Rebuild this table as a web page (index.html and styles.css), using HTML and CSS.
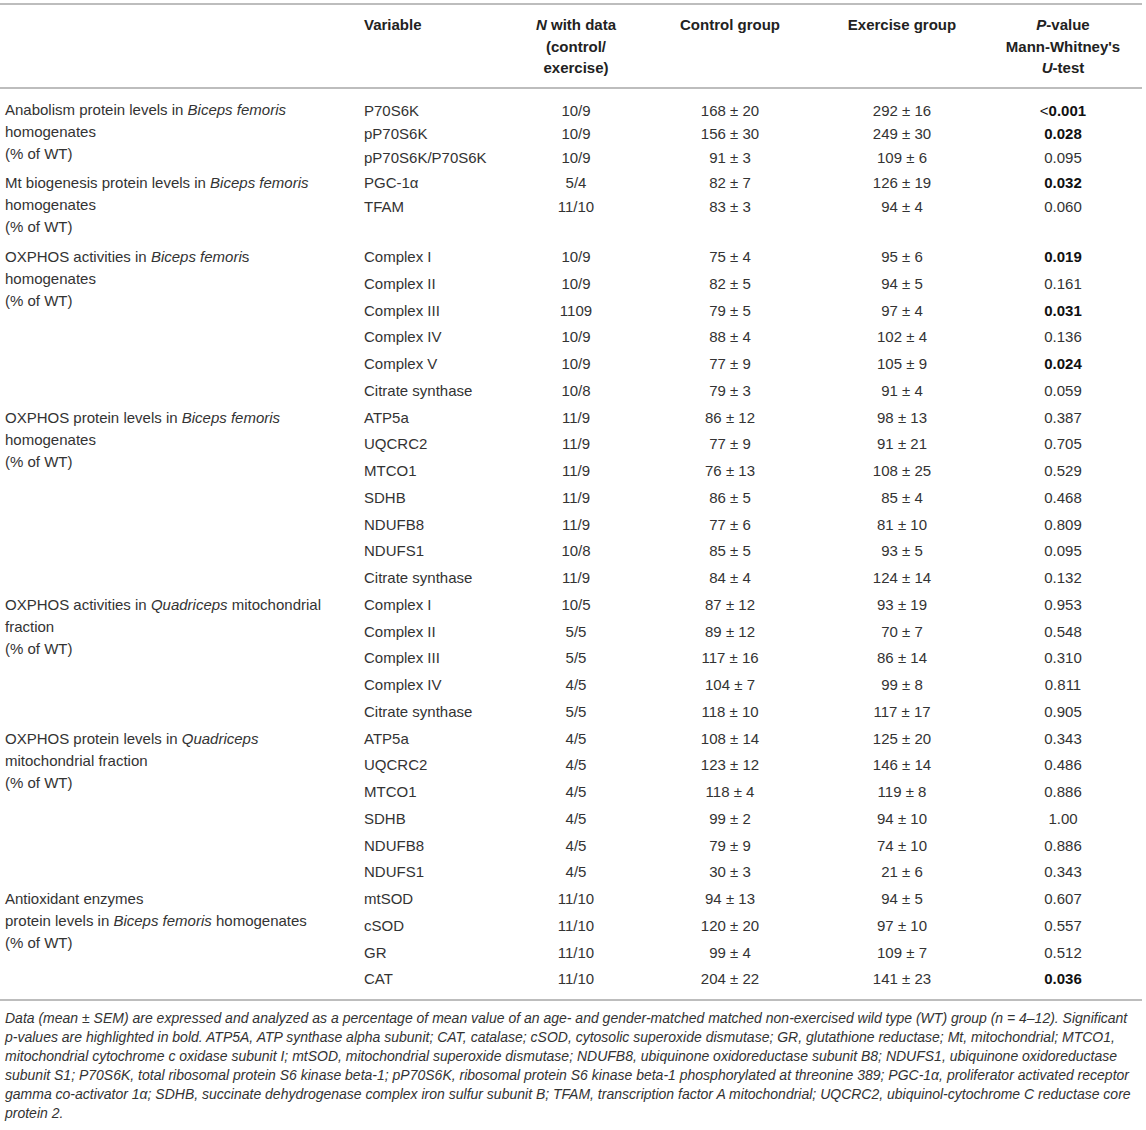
FILE: index.html
```html
<!DOCTYPE html>
<html lang="en">
<head>
<meta charset="utf-8">
<title>Table</title>
<link rel="stylesheet" href="styles.css">
</head>
<body>
<div class="table">
  <div class="thead cols">
    <div class="h"></div>
    <div class="h left">Variable</div>
    <div class="h"><i>N</i> with data<br>(control/<br>exercise)</div>
    <div class="h">Control group</div>
    <div class="h">Exercise group</div>
    <div class="h"><i>P</i>-value<br>Mann-Whitney's<br><i>U</i>-test</div>
  </div>

  <div class="tbody">
    <div class="group tight first">
      <div class="label">Anabolism protein levels in <i>Biceps femoris</i><br>homogenates<br>(% of WT)</div>
      <div class="rows">
        <div class="row"><span class="var">P70S6K</span><span>10/9</span><span>168 ± 20</span><span>292 ± 16</span><span><span class="lt">&lt;</span><b>0.001</b></span></div>
        <div class="row"><span class="var">pP70S6K</span><span>10/9</span><span>156 ± 30</span><span>249 ± 30</span><span><b>0.028</b></span></div>
        <div class="row"><span class="var">pP70S6K/P70S6K</span><span>10/9</span><span>91 ± 3</span><span>109 ± 6</span><span>0.095</span></div>
      </div>
    </div>

    <div class="group tight">
      <div class="label">Mt biogenesis protein levels in <i>Biceps femoris</i><br>homogenates<br>(% of WT)</div>
      <div class="rows">
        <div class="row"><span class="var">PGC-1α</span><span>5/4</span><span>82 ± 7</span><span>126 ± 19</span><span><b>0.032</b></span></div>
        <div class="row"><span class="var">TFAM</span><span>11/10</span><span>83 ± 3</span><span>94 ± 4</span><span>0.060</span></div>
      </div>
    </div>

    <div class="group">
      <div class="label">OXPHOS activities in <i>Biceps femori</i>s<br>homogenates<br>(% of WT)</div>
      <div class="rows">
        <div class="row"><span class="var">Complex I</span><span>10/9</span><span>75 ± 4</span><span>95 ± 6</span><span><b>0.019</b></span></div>
        <div class="row"><span class="var">Complex II</span><span>10/9</span><span>82 ± 5</span><span>94 ± 5</span><span>0.161</span></div>
        <div class="row"><span class="var">Complex III</span><span>1109</span><span>79 ± 5</span><span>97 ± 4</span><span><b>0.031</b></span></div>
        <div class="row"><span class="var">Complex IV</span><span>10/9</span><span>88 ± 4</span><span>102 ± 4</span><span>0.136</span></div>
        <div class="row"><span class="var">Complex V</span><span>10/9</span><span>77 ± 9</span><span>105 ± 9</span><span><b>0.024</b></span></div>
        <div class="row"><span class="var">Citrate synthase</span><span>10/8</span><span>79 ± 3</span><span>91 ± 4</span><span>0.059</span></div>
      </div>
    </div>

    <div class="group">
      <div class="label">OXPHOS protein levels in <i>Biceps femoris</i><br>homogenates<br>(% of WT)</div>
      <div class="rows">
        <div class="row"><span class="var">ATP5a</span><span>11/9</span><span>86 ± 12</span><span>98 ± 13</span><span>0.387</span></div>
        <div class="row"><span class="var">UQCRC2</span><span>11/9</span><span>77 ± 9</span><span>91 ± 21</span><span>0.705</span></div>
        <div class="row"><span class="var">MTCO1</span><span>11/9</span><span>76 ± 13</span><span>108 ± 25</span><span>0.529</span></div>
        <div class="row"><span class="var">SDHB</span><span>11/9</span><span>86 ± 5</span><span>85 ± 4</span><span>0.468</span></div>
        <div class="row"><span class="var">NDUFB8</span><span>11/9</span><span>77 ± 6</span><span>81 ± 10</span><span>0.809</span></div>
        <div class="row"><span class="var">NDUFS1</span><span>10/8</span><span>85 ± 5</span><span>93 ± 5</span><span>0.095</span></div>
        <div class="row"><span class="var">Citrate synthase</span><span>11/9</span><span>84 ± 4</span><span>124 ± 14</span><span>0.132</span></div>
      </div>
    </div>

    <div class="group">
      <div class="label">OXPHOS activities in <i>Quadriceps</i> mitochondrial<br>fraction<br>(% of WT)</div>
      <div class="rows">
        <div class="row"><span class="var">Complex I</span><span>10/5</span><span>87 ± 12</span><span>93 ± 19</span><span>0.953</span></div>
        <div class="row"><span class="var">Complex II</span><span>5/5</span><span>89 ± 12</span><span>70 ± 7</span><span>0.548</span></div>
        <div class="row"><span class="var">Complex III</span><span>5/5</span><span>117 ± 16</span><span>86 ± 14</span><span>0.310</span></div>
        <div class="row"><span class="var">Complex IV</span><span>4/5</span><span>104 ± 7</span><span>99 ± 8</span><span>0.811</span></div>
        <div class="row"><span class="var">Citrate synthase</span><span>5/5</span><span>118 ± 10</span><span>117 ± 17</span><span>0.905</span></div>
      </div>
    </div>

    <div class="group">
      <div class="label">OXPHOS protein levels in <i>Quadriceps</i><br>mitochondrial fraction<br>(% of WT)</div>
      <div class="rows">
        <div class="row"><span class="var">ATP5a</span><span>4/5</span><span>108 ± 14</span><span>125 ± 20</span><span>0.343</span></div>
        <div class="row"><span class="var">UQCRC2</span><span>4/5</span><span>123 ± 12</span><span>146 ± 14</span><span>0.486</span></div>
        <div class="row"><span class="var">MTCO1</span><span>4/5</span><span>118 ± 4</span><span>119 ± 8</span><span>0.886</span></div>
        <div class="row"><span class="var">SDHB</span><span>4/5</span><span>99 ± 2</span><span>94 ± 10</span><span>1.00</span></div>
        <div class="row"><span class="var">NDUFB8</span><span>4/5</span><span>79 ± 9</span><span>74 ± 10</span><span>0.886</span></div>
        <div class="row"><span class="var">NDUFS1</span><span>4/5</span><span>30 ± 3</span><span>21 ± 6</span><span>0.343</span></div>
      </div>
    </div>

    <div class="group last">
      <div class="label">Antioxidant enzymes<br>protein levels in <i>Biceps femoris</i> homogenates<br>(% of WT)</div>
      <div class="rows">
        <div class="row"><span class="var">mtSOD</span><span>11/10</span><span>94 ± 13</span><span>94 ± 5</span><span>0.607</span></div>
        <div class="row"><span class="var">cSOD</span><span>11/10</span><span>120 ± 20</span><span>97 ± 10</span><span>0.557</span></div>
        <div class="row"><span class="var">GR</span><span>11/10</span><span>99 ± 4</span><span>109 ± 7</span><span>0.512</span></div>
        <div class="row"><span class="var">CAT</span><span>11/10</span><span>204 ± 22</span><span>141 ± 23</span><span><b>0.036</b></span></div>
      </div>
    </div>
  </div>

  <div class="foot">
    <span class="line">Data (mean ± SEM) are expressed and analyzed as a percentage of mean value of an age- and gender-matched matched non-exercised wild type (WT) group (n = 4–12). Significant</span>
    <span class="line">p-values are highlighted in bold. ATP5A, ATP synthase alpha subunit; CAT, catalase; cSOD, cytosolic superoxide dismutase; GR, glutathione reductase; Mt, mitochondrial; MTCO1,</span>
    <span class="line">mitochondrial cytochrome c oxidase subunit I; mtSOD, mitochondrial superoxide dismutase; NDUFB8, ubiquinone oxidoreductase subunit B8; NDUFS1, ubiquinone oxidoreductase</span>
    <span class="line">subunit S1; P70S6K, total ribosomal protein S6 kinase beta-1; pP70S6K, ribosomal protein S6 kinase beta-1 phosphorylated at threonine 389; PGC-1α, proliferator activated receptor</span>
    <span class="line">gamma co-activator 1α; SDHB, succinate dehydrogenase complex iron sulfur subunit B; TFAM, transcription factor A mitochondrial; UQCRC2, ubiquinol-cytochrome C reductase core</span>
    <span class="line">protein 2.</span>
  </div>
</div>
</body>
</html>
```

FILE: styles.css
```css
html, body {
  margin: 0;
  padding: 0;
  background: #ffffff;
}

body {
  font-family: "Liberation Sans", Arial, Helvetica, sans-serif;
  color: #333333;
  font-size: 15px;
}

.table {
  width: 1142px;
  margin-top: 3px;
  border-top: 2px solid #bdbdbd;
}

.cols {
  display: grid;
  grid-template-columns: 364px 148px 128px 180px 164px 158px;
}

.thead {
  padding: 9px 0 8px;
  border-bottom: 2px solid #bdbdbd;
  font-weight: bold;
  color: #222222;
  line-height: 21.5px;
}

.h {
  text-align: center;
}

.h.left {
  text-align: left;
}

.tbody {
  padding: 10px 0 6px;
  border-bottom: 2px solid #bdbdbd;
}

.group {
  display: grid;
  grid-template-columns: 364px 778px;
}

.label {
  padding: 2.4px 0 6px 5px;
  line-height: 22px;
}

.tight .label {
  padding-top: 0.75px;
}

.rows {
  display: flex;
  flex-direction: column;
}

.row {
  display: grid;
  grid-template-columns: 148px 128px 180px 164px 158px;
  height: 26.75px;
  line-height: 26.75px;
  text-align: center;
  white-space: nowrap;
}

.tight .row {
  height: 23.5px;
  line-height: 23.5px;
}

.row .var {
  text-align: left;
}

.row b {
  color: #111111;
}

.lt {
  color: #111111;
}

.foot {
  padding: 8px 0 0 5px;
  font-style: italic;
  font-size: 14px;
  line-height: 19px;
  display: flex;
  flex-direction: column;
}

.foot .line {
  white-space: nowrap;
}
```
